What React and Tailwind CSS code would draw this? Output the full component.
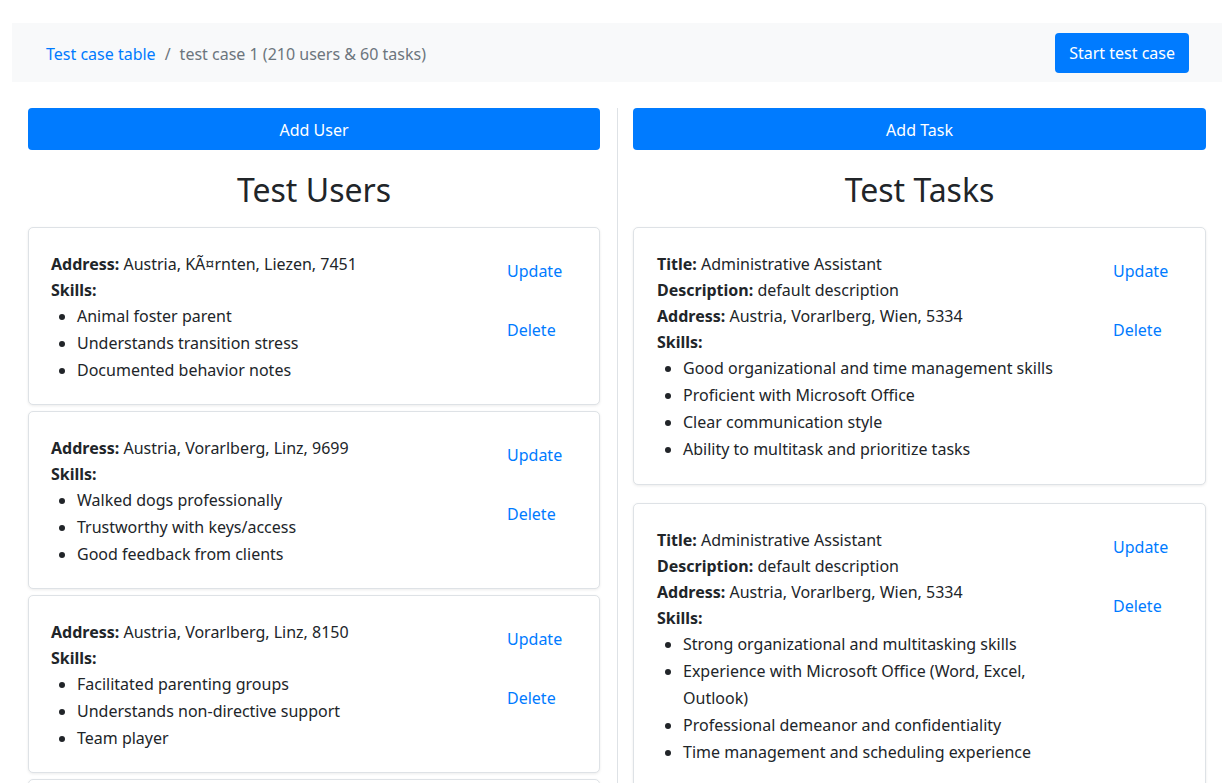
import React from "react";

const users = [
  { address: "Austria, KÃ¤rnten, Liezen, 7451", skills: ["Animal foster parent", "Understands transition stress", "Documented behavior notes"] },
  { address: "Austria, Vorarlberg, Linz, 9699", skills: ["Walked dogs professionally", "Trustworthy with keys/access", "Good feedback from clients"] },
  { address: "Austria, Vorarlberg, Linz, 8150", skills: ["Facilitated parenting groups", "Understands non-directive support", "Team player"] },
  { address: "Austria, Vorarlberg, Graz, 4120", skills: ["Patient listener", "Reliable", "Flexible schedule"] },
];

const tasks = [
  {
    title: "Administrative Assistant",
    description: "default description",
    address: "Austria, Vorarlberg, Wien, 5334",
    skills: ["Good organizational and time management skills", "Proficient with Microsoft Office", "Clear communication style", "Ability to multitask and prioritize tasks"],
  },
  {
    title: "Administrative Assistant",
    description: "default description",
    address: "Austria, Vorarlberg, Wien, 5334",
    skills: ["Strong organizational and multitasking skills", "Experience with Microsoft Office (Word, Excel, Outlook)", "Professional demeanor and confidentiality", "Time management and scheduling experience"],
  },
];

function Actions() {
  return (
    <div className="w-[82px] shrink-0 flex flex-col items-start pt-[8px] gap-[35px]">
      <button className="text-[#007bff] leading-[24px]">Update</button>
      <button className="text-[#007bff] leading-[24px]">Delete</button>
    </div>
  );
}

function Skills({ skills }) {
  return (
    <ul className="list-disc pl-[26px] m-0">
      {skills.map((s, i) => (
        <li key={i} className="leading-[27px]">{s}</li>
      ))}
    </ul>
  );
}

function UserCard({ u }) {
  return (
    <div className="border border-[#dee2e6] rounded-[5px] bg-white shadow-[0_1px_3px_rgba(0,0,0,0.08)] pt-[23px] pb-[20px] pl-[22px] pr-[10px] flex">
      <div className="flex-1">
        <div className="leading-[26px]"><b className="font-bold">Address:</b> {u.address}</div>
        <div className="leading-[26px] font-bold">Skills:</div>
        <Skills skills={u.skills} />
      </div>
      <Actions />
    </div>
  );
}

function TaskCard({ t }) {
  return (
    <div className="border border-[#dee2e6] rounded-[5px] bg-white shadow-[0_1px_3px_rgba(0,0,0,0.08)] pt-[23px] pb-[21px] pl-[23px] pr-[10px] flex">
      <div className="flex-1 pr-[40px]">
        <div className="leading-[26px]"><b className="font-bold">Title:</b> {t.title}</div>
        <div className="leading-[26px]"><b className="font-bold">Description:</b> {t.description}</div>
        <div className="leading-[26px]"><b className="font-bold">Address:</b> {t.address}</div>
        <div className="leading-[26px] font-bold">Skills:</div>
        <Skills skills={t.skills} />
      </div>
      <Actions />
    </div>
  );
}

export default function App() {
  return (
    <div className="bg-white text-[#212529] text-[16px] h-[783px] overflow-hidden" style={{ fontFamily: '"Noto Sans", "Open Sans", sans-serif' }}>
      <div className="pt-[23px] pl-[12px]">
        <div className="w-[1210px] h-[59px] bg-[#f8f9fa] flex items-center justify-between pl-[34px] pr-[33px]">
          <div className="flex items-center pt-[2px]">
            <span className="text-[#007bff]">Test case table</span>
            <span className="text-[#6c757d] px-[9px]">/</span>
            <span className="text-[#6c757d]">test case 1 (210 users &amp; 60 tasks)</span>
          </div>
          <button className="bg-[#007bff] text-white rounded-[4px] h-[40px] px-[14px] leading-[24px] pt-[1px]">Start test case</button>
        </div>
      </div>
      <div className="flex pt-[26px] pl-[28px]">
        <div className="w-[572px] shrink-0">
          <button className="w-full h-[42px] bg-[#007bff] text-white rounded-[4px] pt-[1px]">Add User</button>
          <h2 className="text-[32px] leading-[38px] font-normal text-center mt-[21px] mb-[18px]">Test Users</h2>
          <div className="flex flex-col gap-[6px]">
            {users.map((u, i) => (
              <UserCard key={i} u={u} />
            ))}
          </div>
        </div>
        <div className="w-[1px] bg-[#dee2e6] ml-[17px] mr-[15px] shrink-0" />
        <div className="w-[573px] shrink-0">
          <button className="w-full h-[42px] bg-[#007bff] text-white rounded-[4px] pt-[1px]">Add Task</button>
          <h2 className="text-[32px] leading-[38px] font-normal text-center mt-[21px] mb-[18px]">Test Tasks</h2>
          <div className="flex flex-col gap-[18px]">
            {tasks.map((t, i) => (
              <TaskCard key={i} t={t} />
            ))}
          </div>
        </div>
      </div>
    </div>
  );
}
